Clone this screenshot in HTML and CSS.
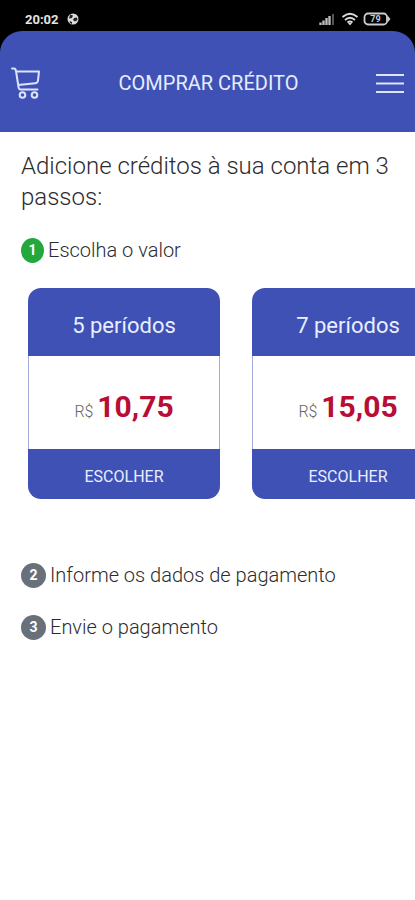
FILE: index.html
```html
<!DOCTYPE html>
<html lang="pt-BR">
<head>
<meta charset="utf-8">
<meta name="viewport" content="width=device-width, initial-scale=1">
<title>Comprar crédito</title>
<link rel="stylesheet" href="styles.css">
</head>
<body>
<div class="top">
  <div class="status">
    <span class="clock">20:02</span>
    <svg class="ball" viewBox="0 0 12 12" width="12" height="12" aria-hidden="true">
      <circle cx="6" cy="6" r="5.5" fill="#ddd"/>
      <path d="M3 1.5 6 2.5 5 5 2 5.5ZM7 5 10 4.500 10.500 7 8 8.500 6 7ZM2.500 8 5 9 5 11 3 10Z" fill="#222"/>
    </svg>
    <span class="spacer"></span>
    <svg class="signal" viewBox="0 0 16 12" width="16" height="12" aria-hidden="true">
      <path d="M1.500 9.500v2.500M4.500 7.500v4.500M7.500 5v7M10.500 3v9" stroke="#bbb" stroke-width="2.400"/>
      <path d="M14 1v11" stroke="#555" stroke-width="2"/>
    </svg>
    <svg class="wifi" viewBox="0 0 18 14" width="18" height="14" aria-hidden="true">
      <path d="M1.500 5Q9-1.500 16.500 5M4 8Q9 3.500 14 8M6.500 10.500Q9 8.500 11.500 10.500" fill="none" stroke="#ddd" stroke-width="1.800"/>
      <path d="M7 11h4l-2 2.500Z" fill="#ddd"/>
    </svg>
    <svg class="battery" viewBox="0 0 28 14" width="28" height="14" aria-hidden="true">
      <rect x="1.500" y="1.500" width="22.500" height="11" rx="3.500" fill="none" stroke="#ccc" stroke-width="1.800"/>
      <path d="M24.500 3.500 27.500 7l-3 3.500Z" fill="#ccc"/>
      <text x="12.500" y="10" text-anchor="middle" class="level">79</text>
    </svg>
  </div>
  <header class="bar">
    <button class="icon" aria-label="Carrinho">
      <svg viewBox="0 0 30 32" width="30" height="32" fill="none" stroke="#dce4ff" stroke-width="2" stroke-linejoin="round" stroke-linecap="round">
        <path d="M1 1.500h2Q4.500 1.500 5 4l2.500 16q.3 2.500 2 2.500h17M5 4.500h23l-1 9q-.3 2.500-2.500 2.700L7 18"/>
        <circle cx="11.500" cy="28" r="2.800"/>
        <circle cx="23.500" cy="28" r="2.800"/>
      </svg>
    </button>
    <h1>COMPRAR CRÉDITO</h1>
    <button class="icon" aria-label="Menu">
      <svg viewBox="0 0 28 22" width="28" height="22" stroke="#dce4ff" stroke-width="2">
        <path d="M0 3h28M0 11.500h28M0 20h28"/>
      </svg>
    </button>
  </header>
</div>
<main>
  <h2>Adicione créditos à sua conta em 3 passos:</h2>
  <h3 class="step active"><span class="num">1</span>Escolha o valor</h3>
  <div class="cards">
    <section class="card">
      <h4>5 períodos</h4>
      <p class="price"><small>R$</small> <strong>10,75</strong></p>
      <button class="choose">ESCOLHER</button>
    </section>
    <section class="card">
      <h4>7 períodos</h4>
      <p class="price"><small>R$</small> <strong>15,05</strong></p>
      <button class="choose">ESCOLHER</button>
    </section>
  </div>
  <h3 class="step"><span class="num">2</span>Informe os dados de pagamento</h3>
  <h3 class="step"><span class="num">3</span>Envie o pagamento</h3>
</main>
</body>
</html>
```
FILE: styles.css
```css
* { box-sizing: border-box; }

body {
  margin: 0;
  background: #fff;
  color: #2c2c30;
  font-family: Roboto, "Liberation Sans", sans-serif;
}

h1, h2, h3, h4, p { margin: 0; font-weight: 300; }

button {
  border: 0;
  padding: 0;
  font: inherit;
  color: inherit;
  background: none;
}

svg { display: block; }

.top { background: #000; }

.status {
  display: flex;
  align-items: center;
  height: 31px;
  padding: 7px 24px 0 25px;
  color: #e4e4e4;
}

.clock { font-size: 13px; font-weight: 700; }
.ball { margin-left: 8px; }
.spacer { flex: 1; }
.wifi { margin: 0 4px 0 6px; }
.level { font-size: 9px; font-weight: 700; fill: #ccc; }

.bar {
  display: flex;
  align-items: center;
  justify-content: space-between;
  height: 101px;
  padding: 2px 11px 0;
  border-radius: 22px 22px 0 0;
  background: #3f51b5;
  color: #e6ecff;
}

.bar h1 { font-size: 20px; font-weight: 400; }

main { padding: 19px 0 0 21px; }

h2 {
  padding-right: 16px;
  font-size: 24px;
  line-height: 31px;
}

.step {
  display: flex;
  align-items: center;
  gap: 4px;
  height: 24px;
  margin-bottom: 28px;
  font-size: 20px;
}

h2 + .step { margin: 25px 0 26px; }

.num {
  width: 25px;
  height: 25px;
  border-radius: 50%;
  background: #68717a;
  color: #fff;
  font-size: 14px;
  font-weight: 700;
  line-height: 25px;
  text-align: center;
}

.active .num {
  width: 23px;
  background: #22a83e;
}

.cards {
  display: flex;
  gap: 32px;
  margin-bottom: 64px;
  padding-left: 7px;
  overflow: hidden;
}

.card {
  flex: 0 0 192px;
  border-radius: 13px;
  overflow: hidden;
  background: #3f51b5;
  color: #e9eeff;
  text-align: center;
}

.card h4 {
  font-size: 22px;
  font-weight: 400;
  line-height: 68px;
  padding-top: 4px;
  height: 68px;
}

.price {
  height: 93px;
  padding-top: 4px;
  border: solid #a3acdc;
  border-width: 0 1px;
  background: #fff;
  line-height: 93px;
}

.price small { color: #666; font-size: 16px; }
.price strong { color: #b80d35; font-size: 30px; font-weight: 700; }

.choose {
  width: 100%;
  height: 50px;
  padding-top: 4px;
  font-size: 16px;
}
```
